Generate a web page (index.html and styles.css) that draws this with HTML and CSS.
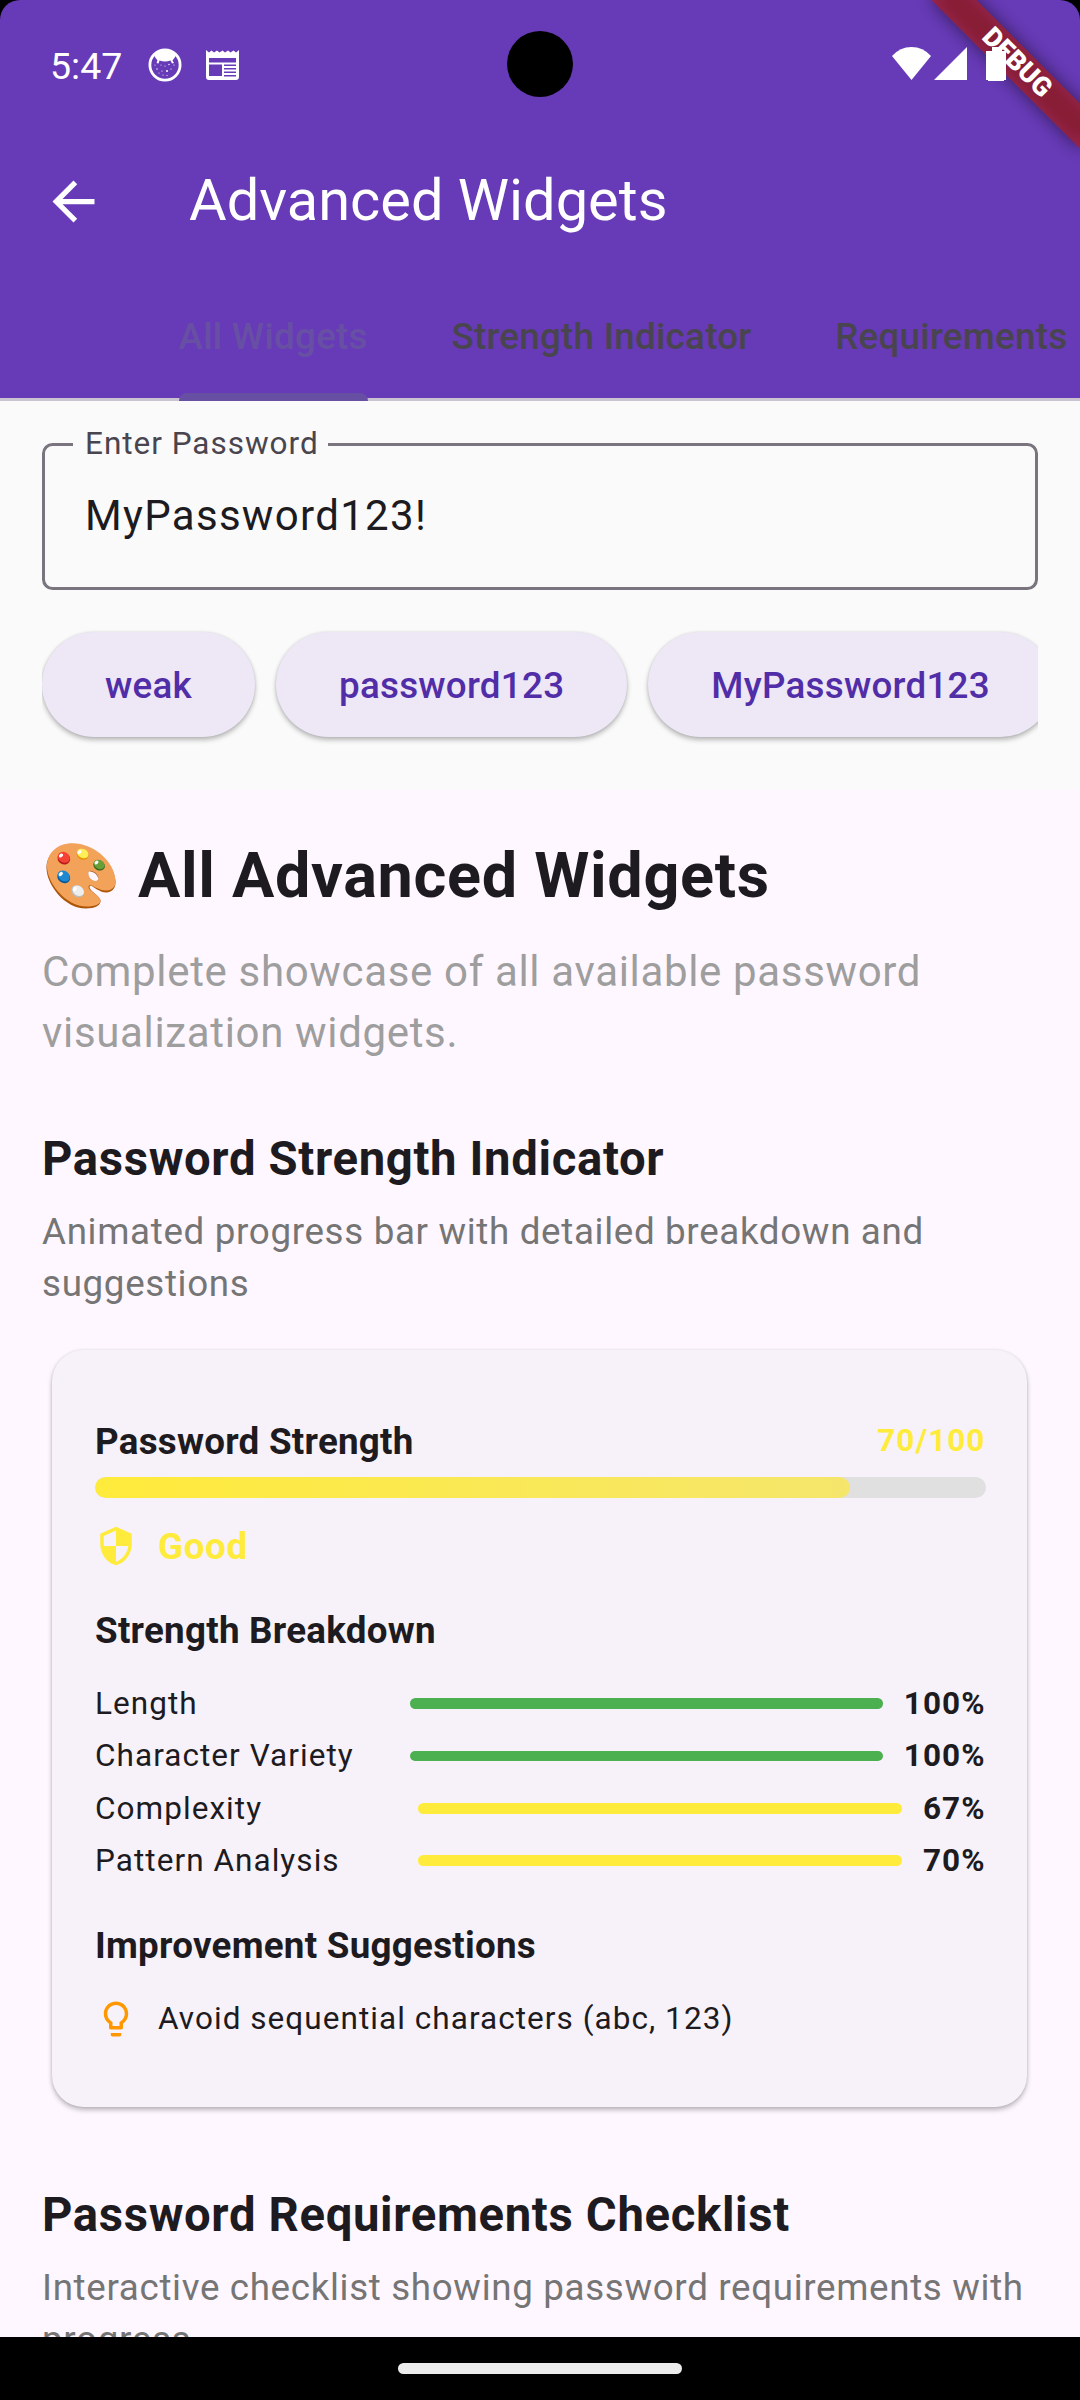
FILE: index.html
```html
<!DOCTYPE html>
<html lang="en">
<head>
<meta charset="utf-8">
<title>Advanced Widgets</title>
<link rel="stylesheet" href="styles.css">
</head>
<body>
<div class="screen">
  <header class="top">
    <div class="status">
      <span class="clock">5:47</span>
      <svg class="cat" viewBox="0 0 34 34"><circle cx="17" cy="17" r="15.1" fill="none" stroke="#fff" stroke-width="2.8"/><path d="M7.5 5.5Q17-1 26.5 5.5L27.5 8.500 24.500 12.500 26 15 24 15.500 22.500 12.500Q17 14.500 11.500 12.500L10.500 15.500 8.500 15 9.500 12.500 6.500 8.500Z" fill="#fff"/><g fill="#fff"><circle cx="9" cy="21" r=".7"/><circle cx="13" cy="17" r=".5"/><circle cx="17" cy="18" r=".6"/><circle cx="21" cy="16.500" r=".7"/><circle cx="19" cy="23" r="1"/><circle cx="14" cy="23" r=".6"/><circle cx="15" cy="27" r=".6"/><circle cx="23" cy="21" r=".6"/><circle cx="26" cy="17" r=".6"/><circle cx="7" cy="17" r=".5"/><circle cx="19" cy="27.500" r=".6"/><circle cx="11" cy="25" r=".5"/></g></svg>
      <svg class="news" viewBox="0 0 33 30"><path d="M0 0 3 2.500 5.500.500 8 2.500 11 .500 13.500 2.500 16.500.500 19 2.500 22 .500 24.500 2.500 27.500.500 30 2.500 33 0V27Q33 30 30 30H3Q0 30 0 27Z" fill="#fff"/><path d="M3 8H30V12.500H3ZM3 14.500H16V26H3ZM18 14.500H30V16H18ZM18 18H30V19.500H18ZM18 21.500H30V23H18ZM18 25H30V26.500H18Z" fill="#673ab7"/></svg>
      <div class="signals">
        <svg class="wifi" viewBox="0 0 39 33"><path d="M0 9Q8 0 19.500 0T39 9L19.500 33Z" fill="#fff"/></svg>
        <svg class="cell" viewBox="0 0 33 33"><path d="M33 0V33H0Z" fill="#fff"/></svg>
        <svg class="battery" viewBox="0 0 20 34"><path d="M6 0H16V4H20V33H18V34H2V33H0V4H6Z" fill="#fff"/></svg>
      </div>
    </div>
    <div class="camera"></div>
    <div class="banner">DEBUG</div>
    <div class="appbar">
      <svg class="back" viewBox="0 0 24 24"><path d="M20 11H7.830l5.590-5.590L12 4l-8 8 8 8 1.410-1.410L7.830 13H20v-2z" fill="#fff"/></svg>
      <h1 class="title">Advanced Widgets</h1>
    </div>
    <nav class="tabs">
      <a class="tab active">All Widgets</a>
      <a class="tab">Strength Indicator</a>
      <a class="tab">Requirements</a>
    </nav>
  </header>

  <section class="panel">
    <div class="field">
      <label class="label">Enter Password</label>
      <div class="value">MyPassword123!</div>
    </div>
    <div class="chips">
      <button class="chip">weak</button>
      <button class="chip">password123</button>
      <button class="chip">MyPassword123</button>
    </div>
  </section>

  <main class="content">
    <h2 class="headline">
      <svg class="palette" viewBox="0 0 70 66">
        <path d="M27 1.500C10 1.500.500 12 .500 25 .500 41 18 65.500 40 65.500 49 65.500 55.500 62 54.500 57 53 52 43 48 43.500 43.500 45 40 52 50 61 49.500 67 49 70 44 69.500 38 68 18 46 1.500 27 1.500Z" fill="#ad5607"/>
        <path fill-rule="evenodd" d="M27 .300C10 .300 1 11 1 23.500 1 39 19 63.500 41 63.500 49 63.500 55.500 61 54.300 57 53 51.500 42 48 42.500 43.500 44 39 52 48.500 61 47.500 67 47 70 43 69.500 37 68 17 46 .300 27 .300ZM44 27.700C48 27.500 53 32 52.500 35.500 51.500 39.500 46 38.500 43.500 34.500 41.500 31 42 28 44 27.700Z" fill="#f2a259"/>
        <path d="M44 27.700C48 27.500 53 32 52.500 35.500 51.500 39.500 46 38.500 43.500 34.500 41.500 31 42 28 44 27.700Z" fill="#fef7ff"/>
        <path d="M44 27.700C48 27.500 53 32 52.500 35.500 51 31 47.500 28.500 43.200 28.500Z" fill="#ad5607"/>
        <g transform="rotate(30 17.700 14.700)"><ellipse cx="18.200" cy="15.400" rx="6.500" ry="5.800" fill="#b71c1c"/><ellipse cx="17.600" cy="14.300" rx="6.300" ry="5.200" fill="#f44336"/></g>
        <g transform="rotate(25 36.600 10.700)"><ellipse cx="37" cy="11.500" rx="6.100" ry="5" fill="#e59600"/><ellipse cx="36.600" cy="10.400" rx="5.900" ry="4.500" fill="#ffee58"/></g>
        <g transform="rotate(30 53 21.700)"><ellipse cx="53.400" cy="22.200" rx="6" ry="5" fill="#33691e"/><ellipse cx="53" cy="21.400" rx="5.700" ry="4.400" fill="#689f38"/></g>
        <g transform="rotate(35 17.700 33.300)"><ellipse cx="18.200" cy="34" rx="6.800" ry="5.700" fill="#01579b"/><ellipse cx="17.600" cy="33" rx="6.400" ry="5.100" fill="#1e88d0"/></g>
        <g transform="rotate(35 31.800 48)"><ellipse cx="31.800" cy="48.400" rx="6.900" ry="5.600" fill="#bdbdbd"/><ellipse cx="32" cy="47.600" rx="6.200" ry="4.800" fill="#eee"/></g>
        <g fill="#fff"><ellipse cx="15" cy="12.500" rx="2.300" ry="1.700" transform="rotate(-40 15 12.500)"/><ellipse cx="33.500" cy="9" rx="2.300" ry="1.600" transform="rotate(-40 33.500 9)"/><ellipse cx="50.500" cy="19.500" rx="2.200" ry="1.600" transform="rotate(-40 50.500 19.500)"/><ellipse cx="14.800" cy="31" rx="2.400" ry="1.700" transform="rotate(-40 14.800 31)"/><ellipse cx="29" cy="46" rx="2.200" ry="1.600" transform="rotate(-40 29 46)"/></g>
      </svg>
      <span>All Advanced Widgets</span>
    </h2>
    <p class="lead">Complete showcase of all available password visualization widgets.</p>

    <h3 class="section">Password Strength Indicator</h3>
    <p class="desc">Animated progress bar with detailed breakdown and suggestions</p>

    <article class="card">
      <div class="score-row">
        <h4 class="card-title">Password Strength</h4>
        <span class="score">70/100</span>
      </div>
      <div class="meter"><div class="meter-fill" style="width:84.8%"></div></div>
      <div class="rating">
        <svg class="icon" viewBox="0 0 24 24"><path d="M12 1L3 5v6c0 5.550 3.840 10.740 9 12 5.160-1.260 9-6.450 9-12V5l-9-4zm0 10.990h7c-.530 4.120-3.280 7.790-7 8.940V12H5V6.300l7-3.110v8.800z" fill="#ffeb3b"/></svg>
        <span class="rating-text">Good</span>
      </div>
      <h4 class="card-title breakdown-title">Strength Breakdown</h4>
      <div class="breakdown">
        <div class="row"><span class="name">Length</span><span class="bar green"></span><b class="pct">100%</b></div>
        <div class="row"><span class="name">Character Variety</span><span class="bar green"></span><b class="pct">100%</b></div>
        <div class="row"><span class="name">Complexity</span><span class="bar"></span><b class="pct">67%</b></div>
        <div class="row"><span class="name">Pattern Analysis</span><span class="bar"></span><b class="pct">70%</b></div>
      </div>
      <h4 class="card-title improve-title">Improvement Suggestions</h4>
      <div class="tip">
        <svg class="icon" viewBox="0 0 24 24"><path d="M9 21c0 .550.450 1 1 1h4c.550 0 1-.450 1-1v-1H9v1zm3-19C8.140 2 5 5.140 5 9c0 2.380 1.190 4.470 3 5.740V17c0 .550.450 1 1 1h6c.550 0 1-.450 1-1v-2.260c1.810-1.270 3-3.360 3-5.740 0-3.860-3.140-7-7-7zm2.850 11.100l-.850.600V16h-4v-2.300l-.850-.600C7.800 12.160 7 10.630 7 9c0-2.760 2.240-5 5-5s5 2.240 5 5c0 1.630-.800 3.160-2.150 4.100z" fill="#ff9800"/></svg>
        <span>Avoid sequential characters (abc, 123)</span>
      </div>
    </article>

    <h3 class="section next">Password Requirements Checklist</h3>
    <p class="desc">Interactive checklist showing password requirements with progress</p>
  </main>

  <footer class="navbar"><div class="handle"></div></footer>
</div>
</body>
</html>
```
FILE: styles.css
```css
* { box-sizing: border-box; }
html { background: #000; }
body { margin: 0; font-family: Roboto, sans-serif; color: #1d1b20; }
h1, h2, h3, h4, p { margin: 0; }
svg { display: block; flex: none; }

.screen {
  width: 1080px;
  height: 2400px;
  display: flex;
  flex-direction: column;
  background: #000;
  overflow: hidden;
}

/* Header */
.top {
  position: relative;
  flex: none;
  height: 401px;
  background: #673ab7;
  border-radius: 20px 20px 0 0;
  overflow: hidden;
}
.status {
  position: relative;
  z-index: 2;
  height: 128px;
  display: flex;
  align-items: center;
  padding: 2px 74px 0 50px;
}
.clock { font-size: 37.5px; line-height: 44px; color: #fff; width: 98px; margin-top: 1px; }
.cat { width: 34px; height: 34px; margin-right: 24px; }
.news { width: 33px; height: 30px; }
.signals { display: flex; align-items: center; margin: -3px 0 0 auto; }
.wifi { width: 39px; height: 33px; margin-right: 3px; }
.cell { width: 33px; height: 33px; margin-right: 19px; }
.battery { width: 20px; height: 34px; }
.camera {
  position: absolute;
  z-index: 2;
  left: 507px;
  top: 31px;
  width: 66px;
  height: 66px;
  border-radius: 50%;
  background: #000;
}
.banner {
  position: absolute;
  z-index: 1;
  left: 911.9px;
  top: 47.4px;
  width: 210px;
  height: 31.5px;
  transform: rotate(45deg);
  color: #fff;
  font-size: 26.8px;
  font-weight: 900;
  line-height: 31.5px;
  text-align: center;
}
.banner::before,
.banner::after {
  content: "";
  position: absolute;
  inset: 0;
  z-index: -1;
}
.banner::before { background: rgba(0, 0, 0, .5); filter: blur(9px); }
.banner::after { background: rgba(183, 28, 28, .63); }
.appbar {
  height: 147px;
  display: flex;
  align-items: center;
  padding-left: 42px;
}
.back { width: 63px; height: 63px; }
.title {
  margin: -4px 0 0 84px;
  font-size: 57.75px;
  font-weight: 400;
  line-height: 74px;
  color: #fff;
}
.tabs {
  height: 126px;
  display: flex;
  gap: 83.6px;
  padding-left: 178.6px;
  border-bottom: 3px solid #cac4d0;
}
.tab {
  position: relative;
  flex: none;
  font-size: 36.75px;
  font-weight: 500;
  letter-spacing: .26px;
  line-height: 123px;
  color: #49454f;
}
.tab.active { color: #6750a4; }
.tab.active::after {
  content: "";
  position: absolute;
  left: 0;
  right: 0;
  bottom: -3px;
  height: 8px;
  border-radius: 8px 8px 0 0;
  background: #6750a4;
}

/* Password entry */
.panel { flex: none; height: 389px; padding: 42px; background: #fafafa; }
.field {
  position: relative;
  height: 147px;
  padding: 43px 40px 0;
  border: 3px solid #79747e;
  border-radius: 10.5px;
}
.label {
  position: absolute;
  left: 28px;
  top: -24px;
  width: 255px;
  padding-left: 12px;
  background: #fafafa;
  font-size: 31.5px;
  letter-spacing: .98px;
  line-height: 43px;
  color: #49454f;
  white-space: nowrap;
}
.value { font-size: 42px; letter-spacing: 1.31px; line-height: 54px; }
.chips {
  display: flex;
  gap: 21px;
  height: 158px;
  padding-top: 42px;
  overflow: hidden;
}
.chip {
  flex: none;
  height: 105px;
  padding: 1px 63px 0;
  border: 0;
  border-radius: 53px;
  background: #ede7f6;
  box-shadow: 0 3px 5px rgba(0, 0, 0, .26), 0 0 3px rgba(0, 0, 0, .1);
  font: 500 36.75px/105px Roboto, sans-serif;
  letter-spacing: .26px;
  color: #512da8;
}

/* Scrolling content */
.content {
  flex: 1;
  min-height: 0;
  overflow: hidden;
  padding: 42px 42px 0;
  background: #fef7ff;
}
.headline {
  display: flex;
  height: 87px;
  font-size: 63px;
  font-weight: 700;
  letter-spacing: .66px;
  line-height: 87px;
}
.palette { width: 70px; height: 66px; margin: 11px 22px 0 4px; }
.lead {
  margin-top: 22px;
  font-size: 42px;
  letter-spacing: .66px;
  line-height: 61px;
  color: #9e9e9e;
}
.section {
  margin-top: 66px;
  font-size: 47.25px;
  font-weight: 700;
  letter-spacing: .66px;
  line-height: 60px;
}
.desc {
  margin-top: 17px;
  font-size: 36.75px;
  letter-spacing: .66px;
  line-height: 52px;
  color: #757575;
}
.card {
  height: 757px;
  margin: 40px 11px 0 10px;
  padding: 66px 41.5px 0 43px;
  border-radius: 31.5px;
  background: #f7f2fa;
  box-shadow: 0 3px 5px rgba(0, 0, 0, .26), 0 0 3px rgba(0, 0, 0, .1);
}
.card-title { font-size: 36.75px; font-weight: 700; letter-spacing: .26px; line-height: 52px; }
.score-row { display: flex; justify-content: space-between; }
.score {
  font-size: 31.5px;
  font-weight: 700;
  letter-spacing: 1.05px;
  line-height: 49px;
  color: #ffeb3b;
}
.meter {
  height: 21px;
  margin-top: 9px;
  border-radius: 10.5px;
  background: #e0e0e0;
  overflow: hidden;
}
.meter-fill {
  height: 100%;
  border-radius: 10.5px;
  background: linear-gradient(90deg, #ffeb3b, #f5e66c);
}
.rating, .tip { display: flex; align-items: center; gap: 21px; height: 52px; }
.rating { margin-top: 22px; }
.icon { width: 42px; height: 42px; }
.rating-text { font-size: 36.75px; font-weight: 700; letter-spacing: .66px; color: #ffeb3b; }
.breakdown-title { margin-top: 33px; }
.breakdown { margin-top: 20.3px; }
.row { display: flex; align-items: center; height: 52.4px; font-size: 31.5px; letter-spacing: 1.05px; }
.name { flex: 2 0 0; white-space: nowrap; }
.bar { flex: 3 0 0; height: 10.5px; border-radius: 5.3px; background: #ffeb3b; }
.bar.green { background: #4caf50; }
.pct { margin-left: 21px; }
.improve-title { margin-top: 33.1px; }
.tip { margin-top: 20.6px; font-size: 31.5px; letter-spacing: 1.05px; }
.section.next { margin-top: 78px; }

/* System navigation */
.navbar {
  flex: none;
  height: 63px;
  display: flex;
  justify-content: center;
  padding-top: 26px;
  background: #000;
}
.handle { width: 284px; height: 11px; border-radius: 6px; background: #ececec; }
```
